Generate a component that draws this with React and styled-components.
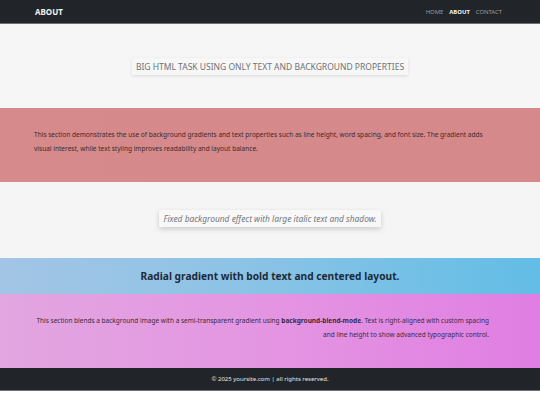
import React from 'react';
import styled, { createGlobalStyle } from 'styled-components';

const GlobalStyle = createGlobalStyle`
    html, body {
        margin: 0;
        padding: 0;
        background: #ffffff;
        font-family: "Noto Sans", "Open Sans", sans-serif;
    }
    * {
        box-sizing: border-box;
    }
`;

const Header = styled.header`
    background: #212529;
    border-bottom: 1px solid #6c6f73;
    height: 24px;
    display: flex;
    align-items: center;
    justify-content: space-between;
    padding: 0 38px 0 35px;
`;

const Logo = styled.div`
    color: #f2f2f2;
    font-weight: 700;
    font-size: 8px;
`;

const Nav = styled.nav`
    display: flex;
    gap: 6px;
`;

const NavLink = styled.a`
    color: ${props => (props.active ? '#f5f5f5' : '#9a9da1')};
    font-weight: ${props => (props.active ? 700 : 400)};
    font-size: 5.9px;
    text-decoration: none;
`;

const Section = styled.section`
    padding: ${props => props.pad || '0 34px'};
    background: ${props => props.bg};
    display: flex;
    justify-content: center;
    align-items: center;
    height: ${props => props.h}px;
`;

const TitleBox = styled.h1`
    margin: 0;
    font-weight: 400;
    font-size: 8.5px;
    color: #6f7276;
    text-transform: uppercase;
    background: #f7f7f7;
    padding: 3px 4px;
    box-shadow: 0 1px 3px rgba(0, 0, 0, 0.12);
`;

const Paragraph = styled.p`
    margin: 0;
    width: 100%;
    font-size: ${props => props.size || 6.55}px;
    line-height: 13.5px;
    color: ${props => props.color || '#3a2a2c'};
    text-align: ${props => props.align || 'left'};
`;

const ItalicBox = styled.p`
    margin: 0;
    font-style: italic;
    font-size: 8.4px;
    color: #74777c;
    background: #f8f8f8;
    padding: 3px 4px;
    box-shadow: 0 2px 5px rgba(0, 0, 0, 0.18);
`;

const BoldHeading = styled.h2`
    margin: 0;
    font-size: 10.2px;
    font-weight: 700;
    color: #1e2a38;
`;

const Footer = styled.footer`
    background: #212529;
    border-bottom: 1px solid #6c6f73;
    height: 23px;
    display: flex;
    align-items: center;
    justify-content: center;
    color: #e6e6e6;
    font-size: 6px;
`;

const App = () => {
    return (
        <>
            <GlobalStyle />
            <Header>
                <Logo>ABOUT</Logo>
                <Nav>
                    <NavLink href="#">HOME</NavLink>
                    <NavLink href="#" active>ABOUT</NavLink>
                    <NavLink href="#">CONTACT</NavLink>
                </Nav>
            </Header>

            <Section bg="#f6f6f6" h={84}>
                <TitleBox>Big HTML task using only text and background properties</TitleBox>
            </Section>

            <Section bg="linear-gradient(90deg, #d78a8b, #d6898a)" h={74} pad="20px 50px 27px 34px">
                <Paragraph>
                    This section demonstrates the use of background gradients and text properties such as line height, word spacing, and font size. The gradient adds visual interest, while text styling improves readability and layout balance.
                </Paragraph>
            </Section>

            <Section bg="#f5f5f5" h={76} pad="0 34px 4px">
                <ItalicBox>Fixed background effect with large italic text and shadow.</ItalicBox>
            </Section>

            <Section bg="radial-gradient(circle at 100% 50%, #62bde6 0%, #8cc3e6 55%, #a3c5e5 100%)" h={36}>
                <BoldHeading>Radial gradient with bold text and centered layout.</BoldHeading>
            </Section>

            <Section bg="linear-gradient(90deg, #e2a6e0 0%, #e495e2 50%, #e07ee3 100%)" h={74} pad="20px 51px 27px 34px">
                <Paragraph align="right" color="#3b2a3b" size={6.5}>
                    This section blends a background image with a semi-transparent gradient using <b>background-blend-mode</b>. Text is right-aligned with custom spacing and line height to show advanced typographic control.
                </Paragraph>
            </Section>

            <Footer>© 2025 yoursite.com | all rights reserved.</Footer>
        </>
    );
};

export default App;
